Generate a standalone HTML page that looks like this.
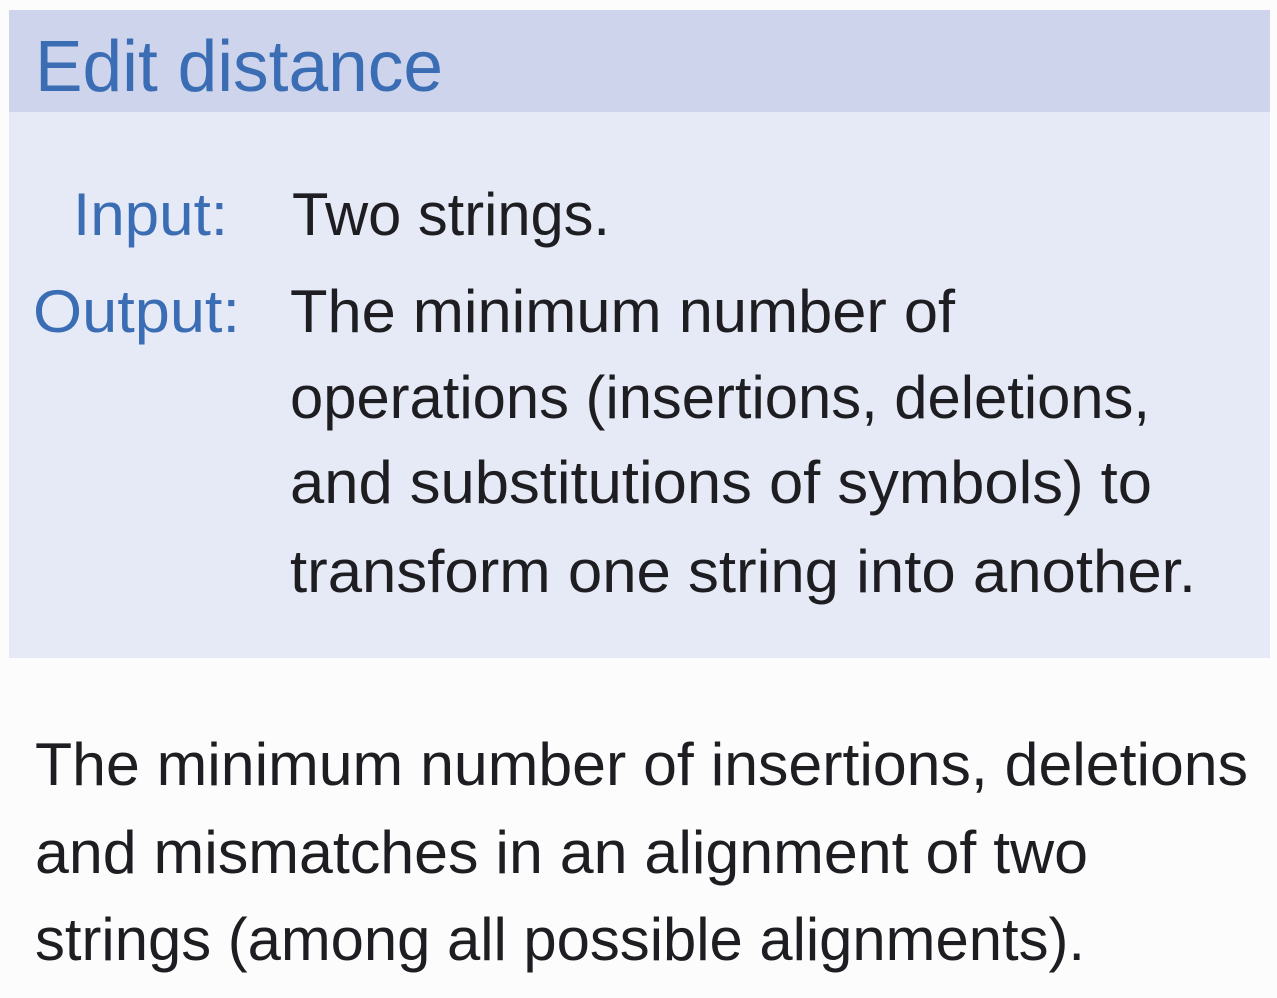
<!DOCTYPE html>
<html><head><meta charset="utf-8"><style>
html,body{margin:0;padding:0;background:#fff;width:1277px;height:998px;overflow:hidden}
svg{display:block}
text{font-family:"Liberation Sans",sans-serif}
</style></head><body>
<svg width="1277" height="998" viewBox="0 0 1277 998">
<rect x="0" y="0" width="1277" height="998" fill="#fcfcfd"/>
<rect x="9" y="10" width="1261" height="102" fill="#cdd4ec"/>
<rect x="9" y="112" width="1261" height="546" fill="#e6eaf6"/>
<g font-size="72" fill="#3b6db4">
<text x="35" y="91" textLength="408" lengthAdjust="spacingAndGlyphs">Edit distance</text>
</g>
<g font-size="60" fill="#3b6db4">
<text x="73" y="235" textLength="155" lengthAdjust="spacingAndGlyphs">Input:</text>
<text x="33" y="332" textLength="207" lengthAdjust="spacingAndGlyphs">Output:</text>
</g>
<g font-size="60" fill="#1e1e22">
<text x="292" y="235" textLength="318" lengthAdjust="spacingAndGlyphs">Two strings.</text>
<text x="290" y="332" textLength="665" lengthAdjust="spacingAndGlyphs">The minimum number of</text>
<text x="290" y="418" textLength="860" lengthAdjust="spacingAndGlyphs">operations (insertions, deletions,</text>
<text x="290" y="503" textLength="862" lengthAdjust="spacingAndGlyphs">and substitutions of symbols) to</text>
<text x="290" y="592" textLength="906" lengthAdjust="spacingAndGlyphs">transform one string into another.</text>
<text x="35" y="785" textLength="1213" lengthAdjust="spacingAndGlyphs">The minimum number of insertions, deletions</text>
<text x="35" y="873" textLength="1053" lengthAdjust="spacingAndGlyphs">and mismatches in an alignment of two</text>
<text x="35" y="960" textLength="1050" lengthAdjust="spacingAndGlyphs">strings (among all possible alignments).</text>
</g>
</svg>
</body></html>
